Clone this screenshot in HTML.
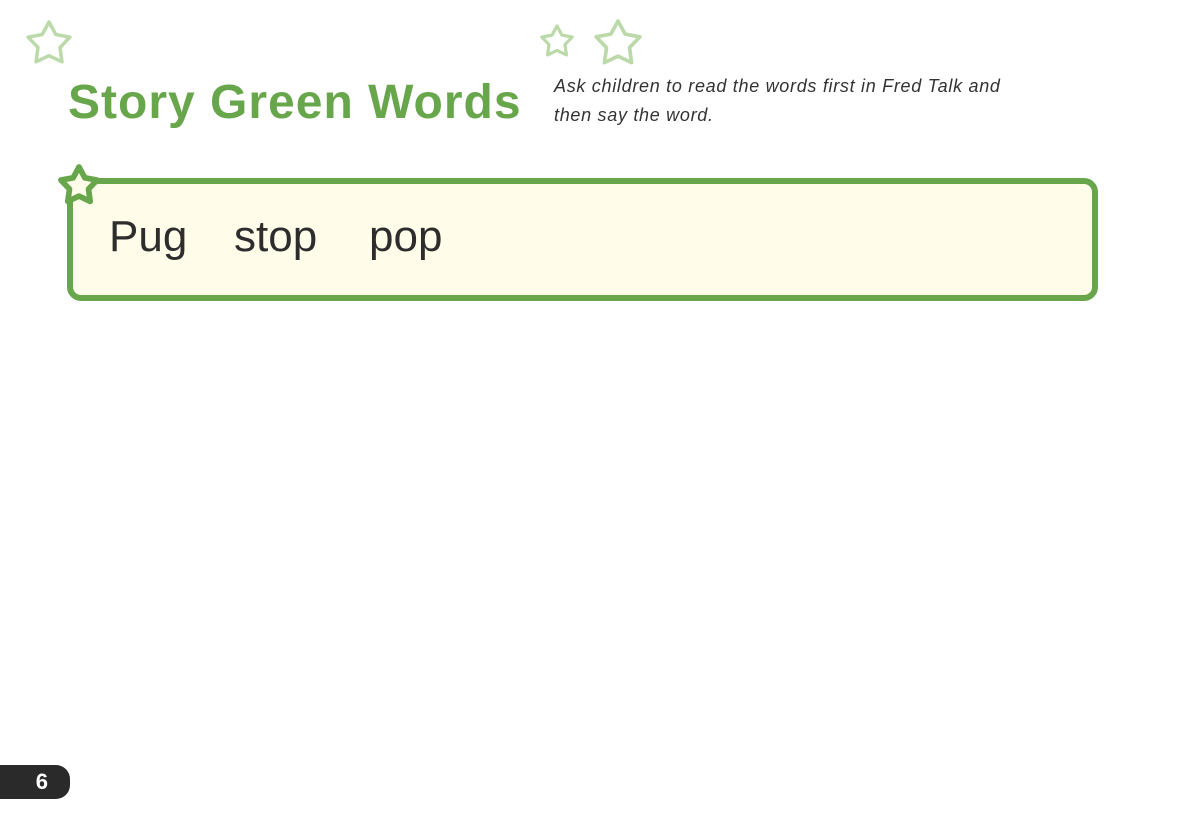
<!DOCTYPE html>
<html><head><style>
body{margin:0;width:1190px;height:839px;background:#fff;position:relative;overflow:hidden;font-family:"Liberation Sans",sans-serif}
.t{position:absolute;left:68px;top:75px;font-size:48px;font-weight:bold;color:#68a64b;white-space:nowrap;letter-spacing:1px}
.i{position:absolute;left:554px;top:72px;font-size:18px;font-style:italic;color:#333;line-height:29px;letter-spacing:0.7px}
.box{position:absolute;left:67px;top:178px;width:1019px;height:111px;border:6px solid #68a64b;border-radius:14px;background:#fffde9}
.w{position:absolute;top:212px;font-size:44px;color:#2d2d2d}
.pg{position:absolute;left:0;top:765px;width:70px;height:34px;background:#2a2a2a;border-radius:0 14px 14px 0;color:#fff;font-weight:bold;font-size:22px;text-align:right;box-sizing:border-box;padding-right:22px;line-height:34px}
svg{position:absolute;overflow:visible}
</style></head><body>
<svg width="1190" height="839" style="left:0;top:0">
<defs><path id="s" d="M0,-1 L0.31,-0.43 L0.95,-0.31 L0.5,0.16 L0.59,0.81 L0,0.53 L-0.59,0.81 L-0.5,0.16 L-0.95,-0.31 L-0.31,-0.43 Z"/></defs>
<g fill="none" stroke="#bcd9a9" stroke-linejoin="round">
<use href="#s" transform="translate(49,44) scale(22)" stroke-width="0.16"/>
<use href="#s" transform="translate(557,42) scale(16)" stroke-width="0.2"/>
<use href="#s" transform="translate(618,44) scale(23)" stroke-width="0.16"/>
</g>
</svg>
<div class="t">Story Green Words</div>
<div class="i">Ask children to read the words first in Fred Talk and<br>then say the word.</div>
<div class="box"></div>
<svg width="1190" height="839" style="left:0;top:0">
<use href="#s" transform="translate(79,186) scale(19)" fill="#fffde9" stroke="#68a64b" stroke-width="0.3" stroke-linejoin="round"/>
</svg>
<div class="w" style="left:109px">Pug</div>
<div class="w" style="left:234px">stop</div>
<div class="w" style="left:369px">pop</div>
<div class="pg">6</div>
</body></html>
